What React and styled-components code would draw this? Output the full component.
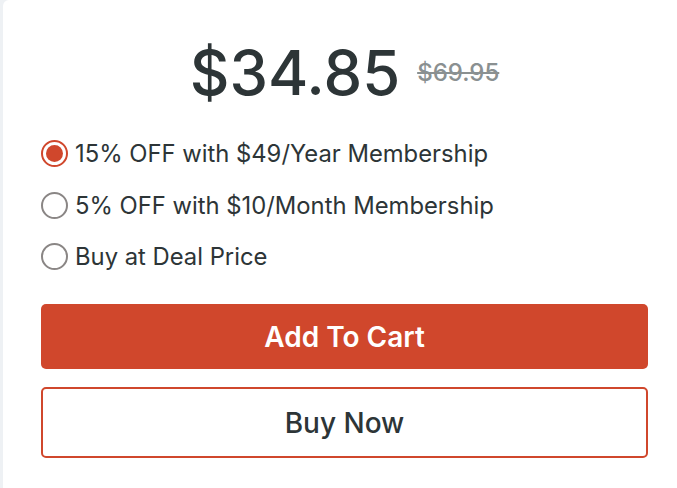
import React, { useState } from "react";
import styled, { createGlobalStyle } from "styled-components";

const Global = createGlobalStyle`
  html, body { margin: 0; padding: 0; background: #eef1f4; overflow: hidden; }
  body { font-family: Inter, "Open Sans", sans-serif; }
`;

const Card = styled.div`
  margin-left: 3px;
  width: 690px;
  height: 488px;
  background: #ffffff;
  border-top-left-radius: 6px;
  box-sizing: border-box;
  padding: 0 0 0 38px;
`;

const Content = styled.div`
  width: 607px;
  display: flex;
  flex-direction: column;
`;

const PriceRow = styled.div`
  display: flex;
  justify-content: center;
  align-items: center;
  gap: 17px;
  padding: 42px 0 24.5px;
`;

const Price = styled.span`
  font-size: 61.5px;
  font-weight: 500;
  color: #2d3537;
  line-height: 1;
`;

const OldPrice = styled.span`
  font-size: 24px;
  font-weight: 500;
  color: #8a9091;
  text-decoration: line-through;
  text-decoration-thickness: 2px;
`;

const Options = styled.div`
  display: flex;
  flex-direction: column;
`;

const Option = styled.label`
  display: flex;
  align-items: center;
  height: 51.5px;
  cursor: pointer;
`;

const Radio = styled.span`
  width: 27px;
  height: 27px;
  box-sizing: border-box;
  border-radius: 50%;
  border: 2px solid ${(p) => (p.$checked ? "#d0472c" : "#8a8685")};
  display: flex;
  align-items: center;
  justify-content: center;
  margin-right: 7px;
  flex-shrink: 0;
  &::after {
    content: "";
    width: 17px;
    height: 17px;
    border-radius: 50%;
    background: ${(p) => (p.$checked ? "#d0472c" : "transparent")};
  }
`;

const OptionText = styled.span`
  font-size: 23.8px;
  color: #2d3537;
`;

const Buttons = styled.div`
  display: flex;
  flex-direction: column;
  gap: 18px;
  margin-top: 21.5px;
`;

const Button = styled.button`
  height: ${(p) => (p.$primary ? "65px" : "71px")};
  border-radius: 5px;
  font-family: inherit;
  font-size: 28px;
  font-weight: ${(p) => (p.$primary ? 600 : 500)};
  background: ${(p) => (p.$primary ? "#d0472c" : "#ffffff")};
  color: ${(p) => (p.$primary ? "#ffffff" : "#2d3537")};
  border: ${(p) => (p.$primary ? "none" : "2.5px solid #d0472c")};
  cursor: pointer;
`;

const options = [
  "15% OFF with $49/Year Membership",
  "5% OFF with $10/Month Membership",
  "Buy at Deal Price",
];

export default function App() {
  const [sel, setSel] = useState(0);
  return (
    <>
      <Global />
      <Card>
        <Content>
          <PriceRow>
            <Price>$34.85</Price>
            <OldPrice>$69.95</OldPrice>
          </PriceRow>
          <Options>
            {options.map((o, i) => (
              <Option key={o} onClick={() => setSel(i)}>
                <Radio $checked={sel === i} />
                <OptionText>{o}</OptionText>
              </Option>
            ))}
          </Options>
          <Buttons>
            <Button $primary>Add To Cart</Button>
            <Button>Buy Now</Button>
          </Buttons>
        </Content>
      </Card>
    </>
  );
}
